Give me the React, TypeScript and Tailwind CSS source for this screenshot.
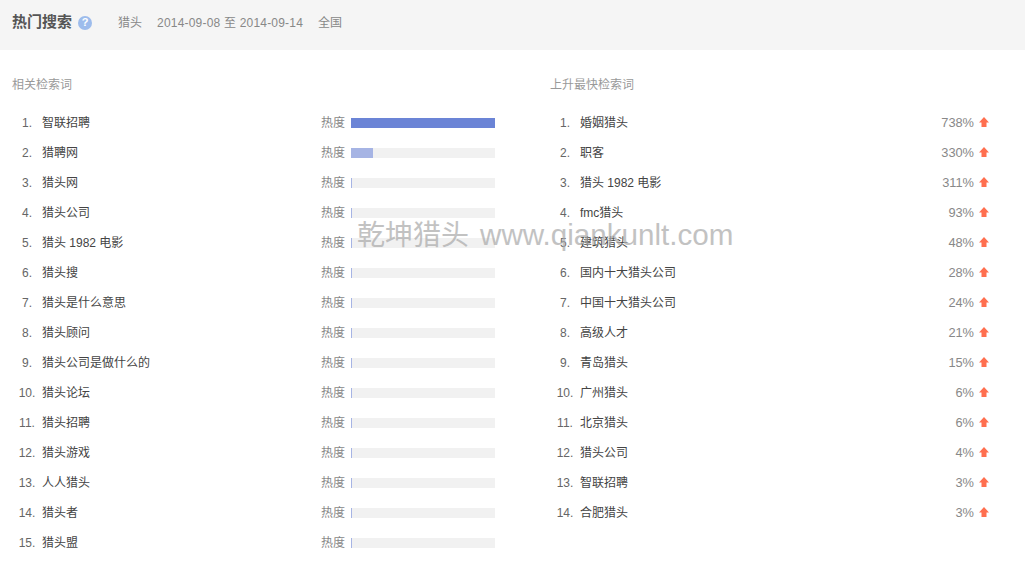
const related = [
  "智联招聘",
  "猎聘网",
  "猎头网",
  "猎头公司",
  "猎头 1982 电影",
  "猎头搜",
  "猎头是什么意思",
  "猎头顾问",
  "猎头公司是做什么的",
  "猎头论坛",
  "猎头招聘",
  "猎头游戏",
  "人人猎头",
  "猎头者",
  "猎头盟",
]

const rising = [
  { name: "婚姻猎头", pct: "738%" },
  { name: "职客", pct: "330%" },
  { name: "猎头 1982 电影", pct: "311%" },
  { name: "fmc猎头", pct: "93%" },
  { name: "建筑猎头", pct: "48%" },
  { name: "国内十大猎头公司", pct: "28%" },
  { name: "中国十大猎头公司", pct: "24%" },
  { name: "高级人才", pct: "21%" },
  { name: "青岛猎头", pct: "15%" },
  { name: "广州猎头", pct: "6%" },
  { name: "北京猎头", pct: "6%" },
  { name: "猎头公司", pct: "4%" },
  { name: "智联招聘", pct: "3%" },
  { name: "合肥猎头", pct: "3%" },
]

const font = "font-['Liberation_Sans','Noto_Sans_CJK_SC',sans-serif]"

function UpArrow() {
  return (
    <svg width="10" height="10" viewBox="0 0 10 10" className="ml-[5px] shrink-0 -translate-y-[1px]">
      <path d="M5 0 L10 5.5 L7.5 5.5 L7.5 10 L2.5 10 L2.5 5.5 L0 5.5 Z" fill="#ff6f4f" />
    </svg>
  )
}

function Heat({ index }: { index: number }) {
  const width = index === 0 ? 144 : index === 1 ? 22 : 1
  return (
    <div className="ml-auto flex items-center">
      <span className="text-[#888]">热度</span>
      <div className="ml-[6px] h-[10px] w-[144px] bg-[#f1f1f1]">
        <div
          className={index === 0 ? "h-full bg-[#6b84d6]" : "h-full bg-[#a6b4e4]"}
          style={{ width }}
        />
      </div>
    </div>
  )
}

export default function App() {
  return (
    <div className={`relative h-[561px] w-[1025px] overflow-hidden bg-white text-[12px] text-[#444] ${font}`}>
      {/* Header */}
      <div className="flex h-[50px] items-center bg-[#f5f5f5] pb-[5px] pl-[12px]">
        <span className="text-[15px] font-bold text-[#555]">热门搜索</span>
        <span className="ml-[6px] flex h-[14px] w-[14px] items-center justify-center rounded-full bg-[#9dbcec] text-[11px] font-bold leading-none text-white">
          ?
        </span>
        <span className="ml-[26px] text-[#888]">猎头</span>
        <span className="ml-[15px] tracking-[0.2px] text-[#888]">2014-09-08 至 2014-09-14</span>
        <span className="ml-[15px] text-[#888]">全国</span>
      </div>

      <div className="flex">
        {/* Related */}
        <div className="ml-[12px] w-[483px]">
          <div className="flex h-[58px] items-center pt-[12px] text-[#999]">相关检索词</div>
          {related.map((name, i) => (
            <div key={name} className="flex h-[30px] items-center">
              <span className="w-[30px] text-center text-[#666]">{i + 1}.</span>
              <span>{name}</span>
              <Heat index={i} />
            </div>
          ))}
        </div>

        {/* Rising */}
        <div className="ml-[55px] w-[439px]">
          <div className="flex h-[58px] items-center pt-[12px] text-[#999]">上升最快检索词</div>
          {rising.map((item, i) => (
            <div key={item.name} className="flex h-[30px] items-center">
              <span className="w-[30px] text-center text-[#666]">{i + 1}.</span>
              <span>{item.name}</span>
              <span className="ml-auto text-[12.8px] text-[#888]">{item.pct}</span>
              <UpArrow />
            </div>
          ))}
        </div>
      </div>

      {/* Watermark */}
      <div className="pointer-events-none absolute left-[357px] top-[217px] flex items-baseline whitespace-nowrap text-[28px] leading-[36px] text-[#a9a9a9] opacity-70">
        <span>乾坤猎头</span>
        <span className="ml-[11px] text-[29.6px]">www.qiankunlt.com</span>
      </div>
    </div>
  )
}
